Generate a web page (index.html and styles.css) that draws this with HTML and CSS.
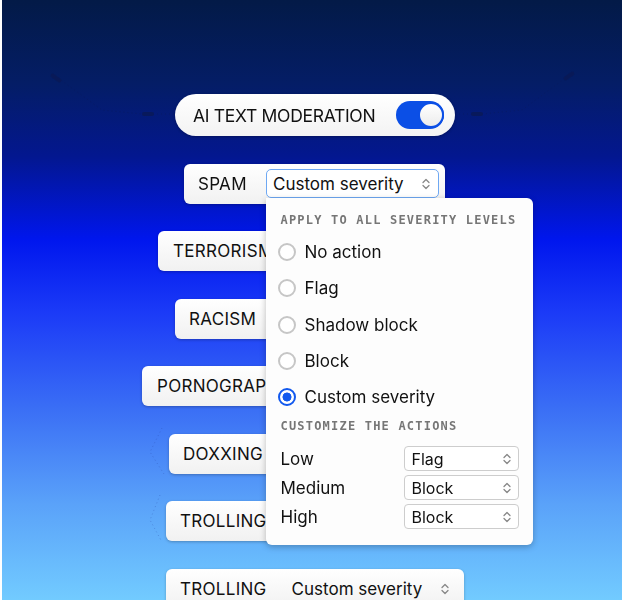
FILE: index.html
```html
<!DOCTYPE html>
<html>
<head>
<meta charset="utf-8">
<link rel="stylesheet" href="styles.css">
</head>
<body>
<div class="stage">
  <svg class="deco" width="620" height="600" viewBox="0 0 620 600">
    <g stroke="#0a1a5a" stroke-width="1" stroke-dasharray="1 3" fill="none" opacity="0.5">
      <path d="M56 78 L100 110 L140 114"/>
      <path d="M151 114 L173 114"/>
      <path d="M453 114 L470 114"/>
      <path d="M480 114 L520 110 L566 76"/>
    </g>
    <g stroke="#2a48a8" stroke-width="1" stroke-dasharray="1 3" fill="none" opacity="0.35">
      <path d="M160 428 L148 452 L162 474"/>
      <path d="M158 495 L148 520 L160 542"/>
    </g>
    <g fill="#0b1a55" opacity="0.8">
      <rect x="48" y="76" width="12" height="4" rx="2" transform="rotate(35 54 78)"/>
      <rect x="140" y="112" width="12" height="4" rx="2"/>
      <rect x="469" y="112" width="12" height="4" rx="2"/>
      <rect x="561" y="74" width="12" height="4" rx="2" transform="rotate(-35 567 76)"/>
    </g>
  </svg>

  <div class="master">
    <span class="master-label">AI TEXT MODERATION</span>
    <span class="switch"><span class="thumb"></span></span>
  </div>

  <div class="card card-spam">
    <span class="cat">SPAM</span>
    <div class="select focus">
      <span>Custom severity</span>
      <svg class="chev" width="10" height="16" viewBox="0 0 10 16"><path d="M2 6.5 L5 3.5 L8 6.5 M2 9.5 L5 12.5 L8 9.5" stroke="#888" stroke-width="1.3" fill="none" stroke-linecap="round" stroke-linejoin="round"/></svg>
      <div class="panel">
        <div class="heading">APPLY TO ALL SEVERITY LEVELS</div>
        <div class="options">
          <div class="opt"><span class="radio"></span>No action</div>
          <div class="opt"><span class="radio"></span>Flag</div>
          <div class="opt"><span class="radio"></span>Shadow block</div>
          <div class="opt"><span class="radio"></span>Block</div>
          <div class="opt"><span class="radio on"></span>Custom severity</div>
        </div>
        <div class="heading heading-2">CUSTOMIZE THE ACTIONS</div>
        <div class="rows">
          <div class="row"><span>Low</span><div class="mini"><span>Flag</span><svg class="chev" width="10" height="16" viewBox="0 0 10 16"><path d="M2 6.5 L5 3.5 L8 6.5 M2 9.5 L5 12.5 L8 9.5" stroke="#888" stroke-width="1.3" fill="none" stroke-linecap="round" stroke-linejoin="round"/></svg></div></div>
          <div class="row"><span>Medium</span><div class="mini"><span>Block</span><svg class="chev" width="10" height="16" viewBox="0 0 10 16"><path d="M2 6.5 L5 3.5 L8 6.5 M2 9.5 L5 12.5 L8 9.5" stroke="#888" stroke-width="1.3" fill="none" stroke-linecap="round" stroke-linejoin="round"/></svg></div></div>
          <div class="row"><span>High</span><div class="mini"><span>Block</span><svg class="chev" width="10" height="16" viewBox="0 0 10 16"><path d="M2 6.5 L5 3.5 L8 6.5 M2 9.5 L5 12.5 L8 9.5" stroke="#888" stroke-width="1.3" fill="none" stroke-linecap="round" stroke-linejoin="round"/></svg></div></div>
        </div>
      </div>
    </div>
  </div>

  <div class="card card-terror">
    <span class="cat">TERRORISM</span>
    <div class="select"></div>
  </div>
  <div class="card card-racism">
    <span class="cat">RACISM</span>
    <div class="select"></div>
  </div>
  <div class="card card-porn">
    <span class="cat">PORNOGRAPHY</span>
    <div class="select"></div>
  </div>
  <div class="card card-dox">
    <span class="cat">DOXXING</span>
    <div class="select"></div>
  </div>
  <div class="card card-troll">
    <span class="cat">TROLLING</span>
    <div class="select"></div>
  </div>
  <div class="card card-troll2">
    <span class="cat">TROLLING</span>
    <div class="select">
      <span>Custom severity</span>
      <svg class="chev" width="10" height="16" viewBox="0 0 10 16"><path d="M2 6.5 L5 3.5 L8 6.5 M2 9.5 L5 12.5 L8 9.5" stroke="#888" stroke-width="1.3" fill="none" stroke-linecap="round" stroke-linejoin="round"/></svg>
    </div>
  </div>
</div>
</body>
</html>
```

FILE: styles.css
```css
html, body {
  margin: 0;
  padding: 0;
  background: #ffffff;
}
body {
  width: 624px;
  height: 600px;
  overflow: hidden;
  font-family: Inter, "Liberation Sans", sans-serif;
  color: #111;
}
.stage {
  position: relative;
  margin: 0 2px;
  width: 620px;
  height: 600px;
  box-sizing: border-box;
  padding-top: 94px;
  display: flex;
  flex-direction: column;
  align-items: flex-start;
  gap: 27.5px;
  background: linear-gradient(to bottom,
    #031a47 0%,
    #041d66 14%,
    #03178f 26%,
    #0016ee 40%,
    #1b3af7 52%,
    #3a6ef5 68%,
    #5aa2f9 84%,
    #72cbff 100%);
  overflow: hidden;
}
.deco {
  position: absolute;
  left: 0;
  top: 0;
  pointer-events: none;
}
.master {
  position: relative;
  flex-shrink: 0;
  margin-left: 173px;
  width: 280px;
  height: 42px;
  box-sizing: border-box;
  border-radius: 21px;
  background: linear-gradient(#ffffff, #f3f3f3);
  box-shadow: 0 1px 3px rgba(0,0,0,0.3);
  display: flex;
  align-items: center;
  justify-content: space-between;
  padding: 0 11px 0 18px;
}
.master-label {
  font-size: 17.5px;
  letter-spacing: -0.3px;
  color: #111;
}
.switch {
  width: 48px;
  height: 28px;
  border-radius: 14px;
  background: #0b4fe6;
  display: flex;
  align-items: center;
  justify-content: flex-end;
}
.thumb {
  width: 22px;
  height: 22px;
  border-radius: 50%;
  background: linear-gradient(#ffffff, #ececec);
  border: 2px solid #0b4fe6;
}
.card {
  position: relative;
  height: 40px;
  box-sizing: border-box;
  border-radius: 6px;
  background: linear-gradient(#ffffff, #f1f1f1);
  box-shadow: 0 1px 3px rgba(0,0,0,0.25);
  display: flex;
  align-items: center;
  gap: 18px;
  padding: 0 6px 0 14px;
  flex-shrink: 0;
}
.card-spam { margin-left: 182px; z-index: 10; }
.card-terror { margin-left: 156px; padding-left: 15px; }
.card-racism { margin-left: 173px; }
.card-porn { margin-left: 140px; padding-left: 15px; }
.card-dox { margin-left: 167px; }
.card-troll { margin-left: 164px; }
.card-troll2 { margin-left: 164px; }
.cat {
  font-size: 17px;
  letter-spacing: 0.3px;
  color: #111;
}
.card-spam .cat {
  min-width: 50px;
}
.select {
  position: relative;
  width: 173px;
  height: 29px;
  box-sizing: border-box;
  border: 1.5px solid transparent;
  border-radius: 5px;
  display: flex;
  align-items: center;
  justify-content: space-between;
  padding: 0 7px 0 6px;
  font-size: 17px;
  color: #111;
}
.select.focus {
  border-color: #6ea8f3;
  background: #fff;
}
.chev {
  display: block;
}
.panel {
  position: absolute;
  left: -1.5px;
  top: 28px;
  width: 267px;
  box-sizing: border-box;
  background: #fdfdfd;
  border-radius: 0 6px 6px 6px;
  box-shadow: 0 2px 6px rgba(0,0,0,0.25);
  padding: 14px 14px 16px 12px;
  display: flex;
  flex-direction: column;
}
.heading {
  font-family: "DejaVu Sans Mono", "Liberation Mono", monospace;
  font-size: 12px;
  font-weight: bold;
  letter-spacing: 1.2px;
  line-height: 16px;
  color: #767676;
  padding-left: 3px;
  white-space: nowrap;
}
.options {
  margin-top: 6px;
  display: flex;
  flex-direction: column;
}
.opt {
  height: 36.3px;
  display: flex;
  align-items: center;
  gap: 9px;
  font-size: 17px;
  color: #111;
}
.radio {
  width: 18px;
  height: 18px;
  box-sizing: border-box;
  border-radius: 50%;
  border: 2px solid #c6c6c6;
  background: #fff;
  flex-shrink: 0;
}
.radio.on {
  border: 2.5px solid #1259ee;
  background: radial-gradient(circle, #1259ee 0 4.2px, #fff 4.8px);
}
.heading-2 {
  margin-top: 3px;
}
.rows {
  margin-top: 12px;
  display: flex;
  flex-direction: column;
  gap: 4px;
}
.row {
  height: 25px;
  display: flex;
  align-items: center;
  justify-content: space-between;
  padding-left: 3px;
  font-size: 17px;
  color: #111;
}
.mini {
  width: 115px;
  height: 25px;
  box-sizing: border-box;
  border: 1px solid #cdcdcd;
  border-radius: 4px;
  background: #fff;
  display: flex;
  align-items: center;
  justify-content: space-between;
  padding: 0 6px 0 7px;
  font-size: 16px;
}
```
